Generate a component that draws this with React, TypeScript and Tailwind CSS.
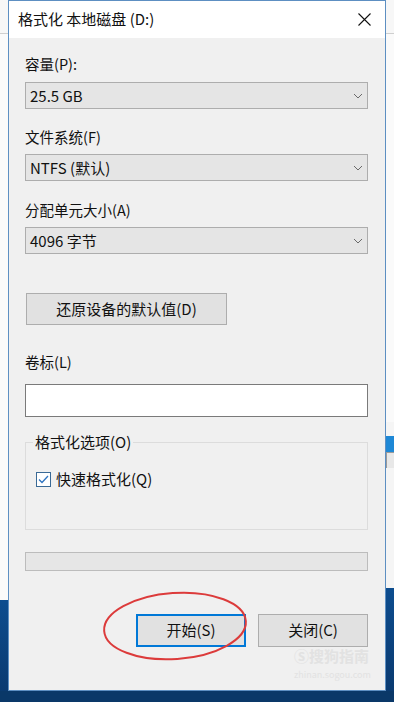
import React from "react";

const font = { fontFamily: '"Noto Sans CJK SC", "Noto Sans", sans-serif' };

function Chevron() {
  return (
    <svg width="10" height="6" viewBox="0 0 10 6" className="shrink-0">
      <path d="M1 1 L5 5 L9 1" fill="none" stroke="#6a6a6a" strokeWidth="1" />
    </svg>
  );
}

function Combo({ value }: { value: string }) {
  return (
    <div className="flex h-[27px] items-center justify-between border border-[#adadad] bg-[#e5e5e5] pl-[4px] pr-[4px]">
      <span className="text-[15px] leading-none text-[#111]">{value}</span>
      <Chevron />
    </div>
  );
}

function Label({ children }: { children: React.ReactNode }) {
  return <div className="h-[20px] text-[14.5px] leading-[20px] text-[#111]">{children}</div>;
}

export default function App() {
  return (
    <div className="relative flex h-[702px] w-[394px] flex-col overflow-hidden bg-[#0b3c72]" style={font}>
      <div className="flex h-[691px]">
        {/* background window, left */}
        <div className="flex w-[8px] flex-col">
          <div className="h-[33px] bg-[#f7f7f7]" />
          <div className="h-[1px] bg-[#cfcfcf]" />
          <div className="h-[566px] bg-[#fafafa]" />
          <div className="flex-1 bg-gradient-to-b from-[#0d4d8f] to-[#0a3a70]" />
        </div>

        {/* dialog */}
        <div className="flex w-[378px] flex-col border border-[#5d8fc2] bg-[#f0f0f0]">
          <div className="flex h-[37px] items-center justify-between bg-white pl-[9px] pr-[14px]">
            <span className="text-[15px] text-[#111]">格式化 本地磁盘 (D:)</span>
            <svg width="13" height="13" viewBox="0 0 13 13">
              <path d="M0.5 0.5 L12.5 12.5 M12.5 0.5 L0.5 12.5" stroke="#111" strokeWidth="1.1" />
            </svg>
          </div>

          <div className="flex flex-col pl-[16px] pr-[17px] pt-[16px]">
            <Label>容量(P):</Label>
            <div className="mt-[8px]">
              <Combo value="25.5 GB" />
            </div>

            <div className="mt-[18px]">
              <Label>文件系统(F)</Label>
            </div>
            <div className="mt-[7px]">
              <Combo value="NTFS (默认)" />
            </div>

            <div className="mt-[19px]">
              <Label>分配单元大小(A)</Label>
            </div>
            <div className="mt-[7px]">
              <Combo value="4096 字节" />
            </div>

            <div className="ml-[1px] mt-[39px] flex h-[32px] w-[201px] items-center justify-center border border-[#adadad] bg-[#e1e1e1] text-[15px] text-[#111]">
              还原设备的默认值(D)
            </div>

            <div className="mt-[27px]">
              <Label>卷标(L)</Label>
            </div>
            <div className="mt-[12px] h-[33px] border border-[#7a7a7a] bg-white" />

            <div className="relative mt-[25px] h-[88px] border border-[#dcdcdc] px-[10px] pt-[26px]">
              <span className="absolute left-[7px] top-[-11px] bg-[#f0f0f0] px-[2px] text-[15px] leading-[20px] text-[#111]">
                格式化选项(O)
              </span>
              <div className="flex items-center gap-[5px]">
                <div className="flex h-[15px] w-[15px] items-center justify-center border border-[#3a6a96] bg-white">
                  <svg width="11" height="9" viewBox="0 0 11 9">
                    <path d="M1 4.5 L4 7.5 L10 1" fill="none" stroke="#2f74c0" strokeWidth="1.3" />
                  </svg>
                </div>
                <span className="text-[15px] leading-[20px] text-[#111]">快速格式化(Q)</span>
              </div>
            </div>

            <div className="mt-[22px] h-[19px] border border-[#bcbcbc] bg-[#e6e6e6]" />

            <div className="mt-[43px] flex justify-end gap-[12px]">
              <div className="flex h-[33px] w-[110px] items-center justify-center border-2 border-[#0078d7] bg-[#e1e1e1] text-[15px] text-[#111]">
                开始(S)
              </div>
              <div className="flex h-[33px] w-[110px] items-center justify-center border border-[#adadad] bg-[#e1e1e1] text-[15px] text-[#111]">
                关闭(C)
              </div>
            </div>
          </div>
        </div>

        {/* background window, right */}
        <div className="flex w-[8px] flex-col">
          <div className="h-[33px] bg-[#f7f7f7]" />
          <div className="h-[1px] bg-[#cfcfcf]" />
          <div className="h-[388px] bg-[#fafafa]" />
          <div className="h-[14px] bg-[#f5f5f5]" />
          <div className="h-[16px] bg-[#1e88d6]" />
          <div className="h-[16px] border-l border-t border-[#9a9a9a] bg-[#e8e8e8]" />
          <div className="h-[120px] bg-[#f5f5f5]" />
          <div className="flex-1 bg-gradient-to-b from-[#0d4d8f] to-[#0a3a70]" />
        </div>
      </div>
      <div className="flex-1 bg-[#0a3868]" />

      {/* red annotation around the start button */}
      <svg className="pointer-events-none absolute left-0 top-0" width="394" height="702">
        <ellipse cx="175" cy="626" rx="71" ry="33" fill="none" stroke="#dc3b3b" strokeWidth="2" transform="rotate(-4 175 626)" />
      </svg>

      {/* watermark */}
      <div className="pointer-events-none absolute left-[294px] top-[648px] flex flex-col items-start gap-[6px] text-[#e2e2e2]">
        <span className="text-[15px] font-bold leading-[16px]">Ⓢ搜狗指南</span>
        <span className="text-[9px] leading-[10px]">zhinan.sogou.com</span>
      </div>
    </div>
  );
}
